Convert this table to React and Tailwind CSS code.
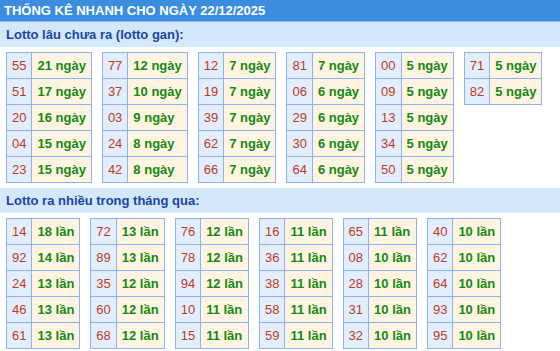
import React from 'react'

const ganTables = [
    [['55', '21 ngày'], ['51', '17 ngày'], ['20', '16 ngày'], ['04', '15 ngày'], ['23', '15 ngày']],
    [['77', '12 ngày'], ['37', '10 ngày'], ['03', '9 ngày'], ['24', '8 ngày'], ['42', '8 ngày']],
    [['12', '7 ngày'], ['19', '7 ngày'], ['39', '7 ngày'], ['62', '7 ngày'], ['66', '7 ngày']],
    [['81', '7 ngày'], ['06', '6 ngày'], ['29', '6 ngày'], ['30', '6 ngày'], ['64', '6 ngày']],
    [['00', '5 ngày'], ['09', '5 ngày'], ['13', '5 ngày'], ['34', '5 ngày'], ['50', '5 ngày']],
    [['71', '5 ngày'], ['82', '5 ngày']],
];

const nhieuTables = [
    [['14', '18 lần'], ['92', '14 lần'], ['24', '13 lần'], ['46', '13 lần'], ['61', '13 lần']],
    [['72', '13 lần'], ['89', '13 lần'], ['35', '12 lần'], ['60', '12 lần'], ['68', '12 lần']],
    [['76', '12 lần'], ['78', '12 lần'], ['94', '12 lần'], ['10', '11 lần'], ['15', '11 lần']],
    [['16', '11 lần'], ['36', '11 lần'], ['38', '11 lần'], ['58', '11 lần'], ['59', '11 lần']],
    [['65', '11 lần'], ['08', '10 lần'], ['28', '10 lần'], ['31', '10 lần'], ['32', '10 lần']],
    [['40', '10 lần'], ['62', '10 lần'], ['64', '10 lần'], ['93', '10 lần'], ['95', '10 lần']],
];

const LottoTable = ({ rows }) => (
    <table className="border-collapse">
        <tbody>
            {rows.map(([so, count]) => (
                <tr key={so}>
                    <td className="border border-[#8db3f5] bg-[#e2eefe] px-[5px] py-[5px] text-center text-[#bf3b20] leading-[15px]">{so}</td>
                    <td className="border border-[#8db3f5] bg-[#fff3e1] px-[5px] py-[5px] font-bold text-[#138a13] leading-[15px] whitespace-nowrap">{count}</td>
                </tr>
            ))}
        </tbody>
    </table>
);

const Section = ({ title, tables }) => (
    <>
        <div className="h-[25px] bg-[#d3e8fb] px-[6px] font-bold text-[#1b45a3] leading-[25px]">{title}</div>
        <div className="flex items-start gap-[10px] pl-[6px] my-[5px]">
            {tables.map((rows, i) => <LottoTable key={i} rows={rows} />)}
        </div>
    </>
);

const App = () => {
    return (
        <main className="w-[560px] h-[351px] overflow-hidden bg-white text-[13px] font-['Liberation_Sans',Arial,sans-serif]">
            {/* header */}
            <div className="h-[22px] bg-[#3a8ddf] border-b border-[#84b8ec] px-[4px] font-bold text-white leading-[21px]">
                THỐNG KÊ NHANH CHO NGÀY 22/12/2025
            </div>

            <Section title="Lotto lâu chưa ra (lotto gan):" tables={ganTables} />
            <Section title="Lotto ra nhiều trong tháng qua:" tables={nhieuTables} />
        </main>
    )
}

export default App
